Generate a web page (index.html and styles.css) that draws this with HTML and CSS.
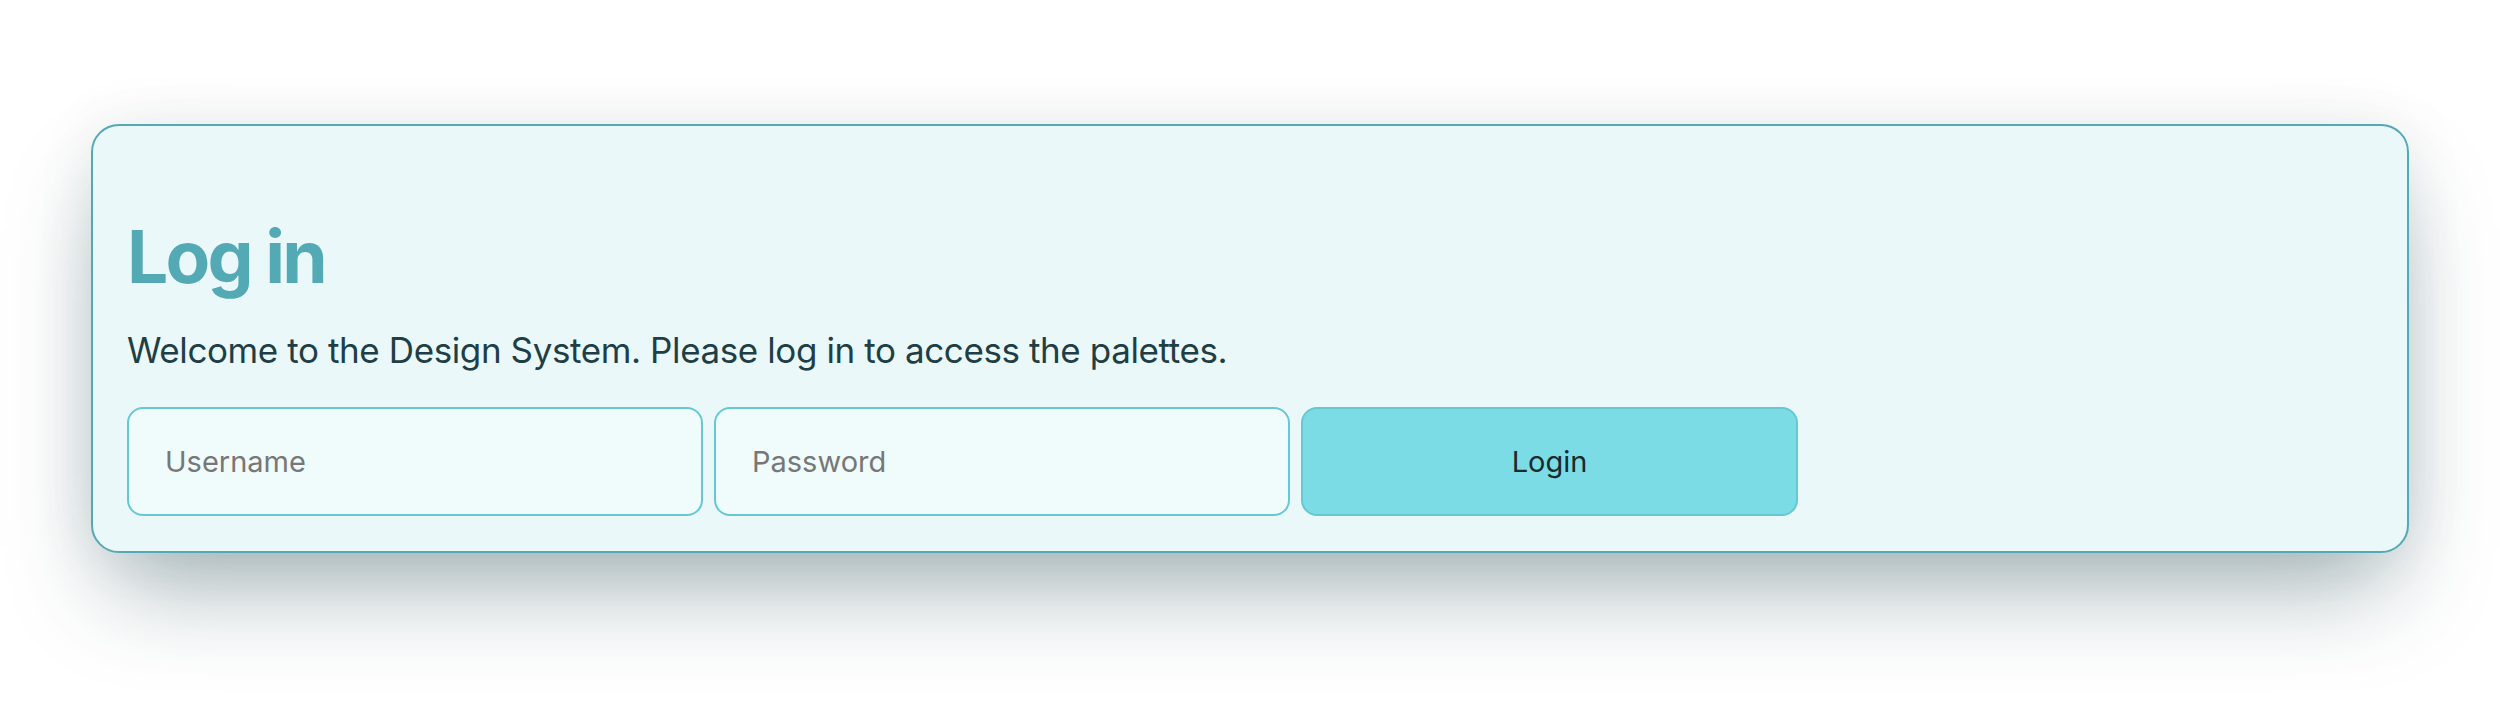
FILE: index.html
```html
<!DOCTYPE html>
<html lang="en">
<head>
<meta charset="utf-8">
<title>Log in</title>
<link rel="stylesheet" href="styles.css">
</head>
<body>
<main class="page">
  <section class="card">
    <h1 class="title">Log in</h1>
    <p class="intro">Welcome to the Design System. Please log in to access the palettes.</p>
    <form class="form">
      <input class="field" type="text" placeholder="Username">
      <input class="field" type="password" placeholder="Password">
      <button class="btn" type="button">Login</button>
    </form>
  </section>
</main>
</body>
</html>
```

FILE: styles.css
```css
html, body {
  margin: 0;
  background: #ffffff;
}
.page {
  box-sizing: border-box;
  min-height: 702px;
  padding: 124px 91px 0;
  font-family: Inter, "Liberation Sans", sans-serif;
}
.card {
  box-sizing: border-box;
  height: 429px;
  border: 2px solid #54a9b4;
  border-radius: 28px;
  background: #ebf8fa;
  padding: 88px 34px 0;
  box-shadow: 0 50px 100px -20px rgba(20, 60, 70, 0.4), 0 0 60px rgba(20, 50, 60, 0.08);
}
.title {
  margin: 0;
  font-size: 73px;
  line-height: 86px;
  font-weight: 700;
  color: #53aab5;
  letter-spacing: -2.8px;
}
.intro {
  margin: 29px 0 0;
  font-size: 35px;
  line-height: 42px;
  color: #1d3f45;
  letter-spacing: -0.4px;
}
.form {
  display: flex;
  gap: 11px;
  margin-top: 36px;
}
.field, .btn {
  box-sizing: border-box;
  height: 109px;
  border-radius: 16px;
  font-family: Inter, "Liberation Sans", sans-serif;
  font-size: 29px;
  outline: none;
}
.field {
  width: 576px;
  border: 2px solid #66c8d4;
  background: #f0fbfc;
  padding: 0 36px;
  color: #333;
}
.field::placeholder {
  color: #777777;
}
.btn {
  width: 497px;
  border: 2px solid #64c8d5;
  background: #7bdce5;
  color: #1b2a2d;
}
```
